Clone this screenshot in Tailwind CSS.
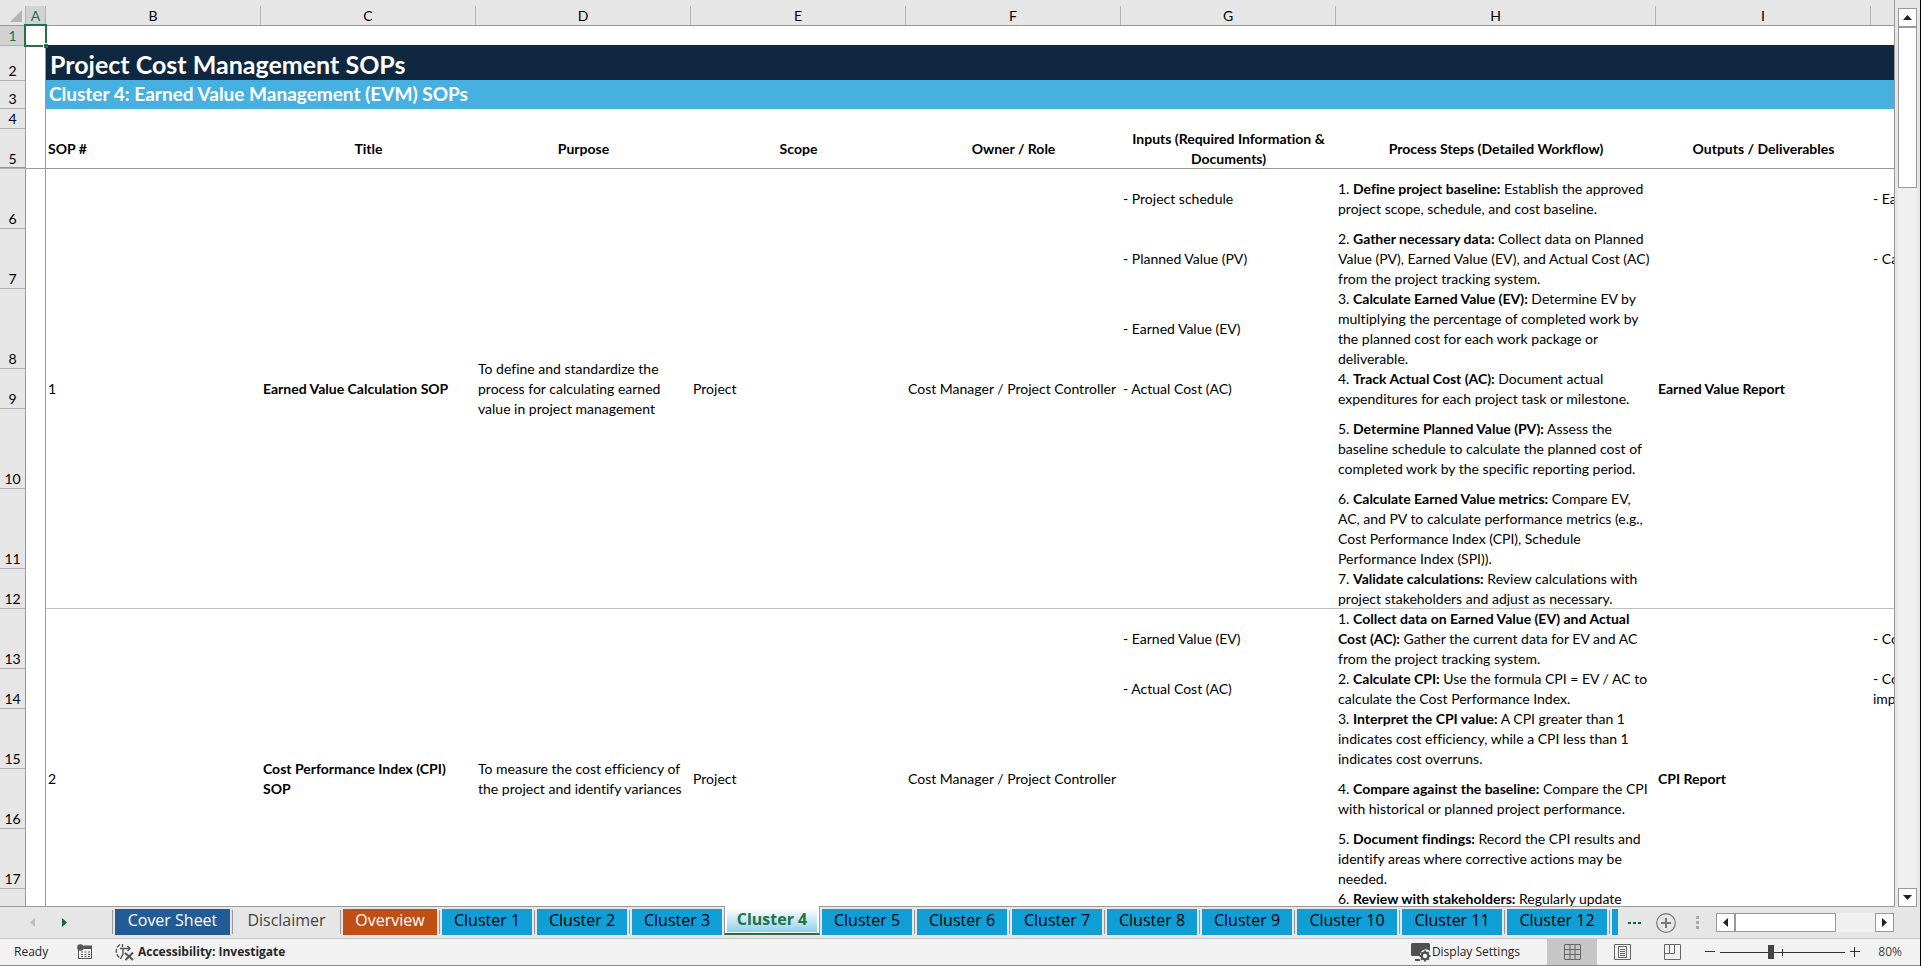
<!DOCTYPE html>
<html lang="en">
  <head>
    <meta charset="UTF-8" />
    <meta name="viewport" content="width=device-width, initial-scale=1.0" />
    <title>Project Cost Management SOPs</title>
    <script src="https://cdn.jsdelivr.net/npm/@tailwindcss/browser@4"></script>
  </head>
  <body class="h-screen overflow-hidden flex flex-col bg-[#e6e6e6] border-r border-black font-['Open_Sans','Noto_Sans',sans-serif] text-[#262626]">
    <!-- Sheet and vertical scrollbar -->
    <main class="flex-1 min-h-0 flex">
      <div class="flex-1 min-w-0 overflow-hidden pt-[6px] border-r border-b border-[#999]">
        <table class="w-full table-fixed border-separate border-spacing-0 font-['Lato',sans-serif] [font-variant-ligatures:none] text-[14px] leading-5 text-black whitespace-nowrap [&_td]:p-0 [&_td]:px-[2px] [&_td]:bg-white [&_tbody_th]:px-[2px]">
          <colgroup>
            <col class="w-[26px]" />
            <col class="w-[20px]" />
            <col class="w-[215px]" />
            <col class="w-[215px]" />
            <col class="w-[215px]" />
            <col class="w-[215px]" />
            <col class="w-[215px]" />
            <col class="w-[215px]" />
            <col class="w-[320px]" />
            <col class="w-[215px]" />
            <col />
          </colgroup>
          <thead class="text-[14px] leading-[19px] [&_th]:p-0 [&_th]:font-normal [&_th]:border-b [&_th]:border-r [&_th]:border-b-[#999] [&_th]:border-r-[#b4b4b4]">
            <tr class="h-[20px]">
              <th aria-label="Select all">
                <svg class="ml-auto mr-[3px]" width="12" height="12" viewBox="0 0 12 12"><path d="M12 0v12H0z" fill="#b4b4b4" /></svg>
              </th>
              <th class="bg-[#d2d2d2] text-[#217346]">A</th>
              <th>B</th>
              <th>C</th>
              <th>D</th>
              <th>E</th>
              <th>F</th>
              <th>G</th>
              <th>H</th>
              <th>I</th>
              <th class="!border-r-0"></th>
            </tr>
          </thead>
          <tbody class="[&_th.n]:p-0 [&_th.n]:font-normal [&_th.n]:text-[14px] [&_th.n]:leading-[19px] [&_th.n]:align-bottom [&_th.n]:border-b [&_th.n]:border-r [&_th.n]:border-b-[#b0b0b0] [&_th.n]:border-r-[#999] [&_td.a]:border-r [&_td.a]:border-[#999]">
            <tr class="h-[20px]">
              <th class="n bg-[#d2d2d2] text-[#217346]">1</th>
              <td class="a relative">
                <div class="absolute -top-[2px] -left-[2px] -right-[2px] -bottom-[1px] border-2 border-[#217346]"></div>
                <div class="absolute -right-[3px] -bottom-[2px] size-[5px] bg-[#217346] border-l border-t border-white"></div>
              </td>
              <td colspan="9"></td>
            </tr>
            <tr class="h-[35px]">
              <th class="n">2</th>
              <td class="a"></td>
              <td colspan="9" class="!bg-[#0f2840] !px-1 shadow-[0_-1px_0_#0f2840] text-white text-[25px] leading-[34px] font-bold">Project Cost Management SOPs</td>
            </tr>
            <tr class="h-[28px]">
              <th class="n">3</th>
              <td class="a"></td>
              <td colspan="9" class="!bg-[#46b1e1] !px-[3px] shadow-[0_-1px_0_#46b1e1] text-white text-[19px] leading-[26px] align-top font-bold">Cluster 4: Earned Value Management (EVM) SOPs</td>
            </tr>
            <tr class="h-[20px]">
              <th class="n">4</th>
              <td class="a"></td>
              <td colspan="9"></td>
            </tr>
            <tr class="h-[40px] [&>*]:shadow-[inset_0_-1px_0_#999] [&>*]:bg-white">
              <th class="n !bg-[#e6e6e6]">5</th>
              <td class="a"></td>
              <th class="text-left">SOP #</th>
              <th>Title</th>
              <th>Purpose</th>
              <th>Scope</th>
              <th>Owner / Role</th>
              <th>Inputs (Required Information &amp;<br />Documents)</th>
              <th>Process Steps (Detailed Workflow)</th>
              <th>Outputs / Deliverables</th>
              <th></th>
            </tr>

            <!-- SOP 1 -->
            <tr class="h-[60px]">
              <th class="n">6</th>
              <td class="a"></td>
              <td rowspan="7" class="shadow-[inset_0_-1px_0_#c0c0c0]">1</td>
              <td rowspan="7" class="shadow-[inset_0_-1px_0_#c0c0c0] font-bold">Earned Value Calculation SOP</td>
              <td rowspan="7" class="shadow-[inset_0_-1px_0_#c0c0c0]">To define and standardize the<br />process for calculating earned<br />value in project management</td>
              <td rowspan="7" class="shadow-[inset_0_-1px_0_#c0c0c0]">Project</td>
              <td rowspan="7" class="shadow-[inset_0_-1px_0_#c0c0c0]">Cost Manager / Project Controller</td>
              <td>- Project schedule</td>
              <td>1. <b>Define project baseline:</b> Establish the approved<br />project scope, schedule, and cost baseline.</td>
              <td rowspan="7" class="shadow-[inset_0_-1px_0_#c0c0c0] font-bold">Earned Value Report</td>
              <td>- Ea</td>
            </tr>
            <tr class="h-[60px]">
              <th class="n">7</th>
              <td class="a"></td>
              <td>- Planned Value (PV)</td>
              <td>2. <b>Gather necessary data:</b> Collect data on Planned<br />Value (PV), Earned Value (EV), and Actual Cost (AC)<br />from the project tracking system.</td>
              <td>- Ca</td>
            </tr>
            <tr class="h-[80px]">
              <th class="n">8</th>
              <td class="a"></td>
              <td>- Earned Value (EV)</td>
              <td>3. <b>Calculate Earned Value (EV):</b> Determine EV by<br />multiplying the percentage of completed work by<br />the planned cost for each work package or<br />deliverable.</td>
              <td></td>
            </tr>
            <tr class="h-[40px]">
              <th class="n">9</th>
              <td class="a"></td>
              <td>- Actual Cost (AC)</td>
              <td>4. <b>Track Actual Cost (AC):</b> Document actual<br />expenditures for each project task or milestone.</td>
              <td></td>
            </tr>
            <tr class="h-[80px]">
              <th class="n">10</th>
              <td class="a"></td>
              <td></td>
              <td>5. <b>Determine Planned Value (PV):</b> Assess the<br />baseline schedule to calculate the planned cost of<br />completed work by the specific reporting period.</td>
              <td></td>
            </tr>
            <tr class="h-[80px]">
              <th class="n">11</th>
              <td class="a"></td>
              <td></td>
              <td>6. <b>Calculate Earned Value metrics:</b> Compare EV,<br />AC, and PV to calculate performance metrics (e.g.,<br />Cost Performance Index (CPI), Schedule<br />Performance Index (SPI)).</td>
              <td></td>
            </tr>
            <tr class="h-[40px]">
              <th class="n">12</th>
              <td class="a"></td>
              <td class="shadow-[inset_0_-1px_0_#c0c0c0]"></td>
              <td class="shadow-[inset_0_-1px_0_#c0c0c0]">7. <b>Validate calculations:</b> Review calculations with<br />project stakeholders and adjust as necessary.</td>
              <td class="shadow-[inset_0_-1px_0_#c0c0c0]"></td>
            </tr>

            <!-- SOP 2 -->
            <tr class="h-[60px]">
              <th class="n">13</th>
              <td class="a"></td>
              <td rowspan="6">2</td>
              <td rowspan="6" class="font-bold">Cost Performance Index (CPI)<br />SOP</td>
              <td rowspan="6">To measure the cost efficiency of<br />the project and identify variances</td>
              <td rowspan="6">Project</td>
              <td rowspan="6">Cost Manager / Project Controller</td>
              <td>- Earned Value (EV)</td>
              <td>1. <b>Collect data on Earned Value (EV) and Actual<br />Cost (AC):</b> Gather the current data for EV and AC<br />from the project tracking system.</td>
              <td rowspan="6" class="font-bold">CPI Report</td>
              <td>- Co</td>
            </tr>
            <tr class="h-[40px]">
              <th class="n">14</th>
              <td class="a"></td>
              <td>- Actual Cost (AC)</td>
              <td>2. <b>Calculate CPI:</b> Use the formula CPI = EV / AC to<br />calculate the Cost Performance Index.</td>
              <td>- Co<br />imp</td>
            </tr>
            <tr class="h-[60px]">
              <th class="n">15</th>
              <td class="a"></td>
              <td></td>
              <td>3. <b>Interpret the CPI value:</b> A CPI greater than 1<br />indicates cost efficiency, while a CPI less than 1<br />indicates cost overruns.</td>
              <td></td>
            </tr>
            <tr class="h-[60px]">
              <th class="n">16</th>
              <td class="a"></td>
              <td></td>
              <td>4. <b>Compare against the baseline:</b> Compare the CPI<br />with historical or planned project performance.</td>
              <td></td>
            </tr>
            <tr class="h-[60px]">
              <th class="n">17</th>
              <td class="a"></td>
              <td></td>
              <td>5. <b>Document findings:</b> Record the CPI results and<br />identify areas where corrective actions may be<br />needed.</td>
              <td></td>
            </tr>
            <tr class="h-[60px]">
              <th class="n"></th>
              <td class="a"></td>
              <td></td>
              <td class="align-top">6. <b>Review with stakeholders:</b> Regularly update</td>
              <td></td>
            </tr>
          </tbody>
        </table>
      </div>

      <div class="w-[19px] ml-[3px] mr-[3px] pt-[8px] flex flex-col bg-[#f0f0f0] shadow-[inset_0_8px_0_#e6e6e6]">
        <button aria-label="Scroll up" class="h-[19px] bg-white border border-[#999] flex items-center justify-center">
          <svg width="9" height="5" viewBox="0 0 9 5"><path d="M4.500 0L9 5H0z" fill="#222" /></svg>
        </button>
        <div class="h-[161px] bg-white border border-[#999]"></div>
        <button aria-label="Scroll down" class="mt-auto h-[19px] bg-white border border-[#999] flex items-center justify-center">
          <svg width="9" height="5" viewBox="0 0 9 5"><path d="M0 0h9L4.500 5z" fill="#222" /></svg>
        </button>
      </div>
    </main>

    <!-- Sheet tabs -->
    <nav class="h-[32px] shrink-0 flex border-b border-[#c6c6c6] text-[16px] leading-[22px] text-black whitespace-nowrap">
      <div class="w-[112px] shrink-0 flex items-center pl-[30px] gap-[27px]">
        <button aria-label="Previous sheet"><svg width="5" height="9" viewBox="0 0 5 9"><path d="M5 0v9L0 4.500z" fill="#bdbdbd" /></svg></button>
        <button aria-label="Next sheet"><svg width="5" height="9" viewBox="0 0 5 9"><path d="M0 0v9l5-4.500z" fill="#0c6b37" /></svg></button>
      </div>
      <ul class="flex min-w-0 [&>li]:flex [&>li]:shrink-0 [&>li]:pr-[2px] [&_i]:w-px [&_i]:h-[24px] [&_i]:mt-[3px] [&_i]:mr-[2px] [&_i]:bg-[#999] [&_button]:h-[26px] [&_button]:pb-[6px]">
        <li><i></i><button class="mt-[2px] w-[115px] bg-[#215c98] text-white">Cover Sheet</button></li>
        <li><i></i><button class="mt-[2px] w-[103px] text-[#444]">Disclaimer</button></li>
        <li><i></i><button class="mt-[2px] w-[94px] bg-[#c04f15] text-white">Overview</button></li>
        <li><i></i><button class="mt-[2px] w-[90px] bg-[#0f9ed5]">Cluster 1</button></li>
        <li><i></i><button class="mt-[2px] w-[90px] bg-[#0f9ed5]">Cluster 2</button></li>
        <li><i></i><button class="mt-[2px] w-[90px] bg-[#0f9ed5]">Cluster 3</button></li>
        <li class="-mt-px w-[96px] h-[29px] !pr-0 bg-white border-x border-[#999] border-b-2 border-b-[#217346]">
          <button aria-current="page" class="mx-[2px] mt-[2px] !h-[24px] !pb-[2px] flex-1 bg-linear-to-b from-white to-[#8dd0ec] text-[#217346] font-bold">Cluster 4</button>
        </li>
        <li class="pl-[2px]"><button class="mt-[2px] w-[90px] bg-[#0f9ed5]">Cluster 5</button></li>
        <li><i></i><button class="mt-[2px] w-[90px] bg-[#0f9ed5]">Cluster 6</button></li>
        <li><i></i><button class="mt-[2px] w-[90px] bg-[#0f9ed5]">Cluster 7</button></li>
        <li><i></i><button class="mt-[2px] w-[90px] bg-[#0f9ed5]">Cluster 8</button></li>
        <li><i></i><button class="mt-[2px] w-[90px] bg-[#0f9ed5]">Cluster 9</button></li>
        <li><i></i><button class="mt-[2px] w-[100px] bg-[#0f9ed5]">Cluster 10</button></li>
        <li><i></i><button class="mt-[2px] w-[100px] bg-[#0f9ed5]">Cluster 11</button></li>
        <li><i></i><button class="mt-[2px] w-[100px] bg-[#0f9ed5]">Cluster 12</button></li>
        <li class="!pr-0"><i></i><button aria-label="Next tab" class="mt-[2px] w-[6px] bg-[#0f9ed5]"></button></li>
      </ul>
      <div class="ml-auto mr-[26px] shrink-0 flex items-center">
        <button aria-label="More sheets"><svg width="13" height="4" viewBox="0 0 13 4"><path d="M0 1h3v2H0zM5 1h3v2H5zM10 1h3v2h-3z" fill="#0c6b37" /></svg></button>
        <button aria-label="New sheet" class="ml-[15px]">
          <svg width="20" height="20" viewBox="0 0 20 20" fill="none" stroke="#777"><circle cx="10" cy="10" r="9.300" stroke-width="1.200" /><path d="M10 5v10M5 10h10" stroke-width="2" /></svg>
        </button>
        <svg class="ml-[20px]" width="3" height="13" viewBox="0 0 3 13" fill="#aaa"><path d="M0 0h3v3H0zM0 5h3v3H0zM0 10h3v3H0z" /></svg>
        <div class="ml-[17px] w-[178px] h-[19px] flex bg-[#f0f0f0]">
          <button aria-label="Scroll left" class="w-[19px] bg-white border border-[#999] flex items-center justify-center">
            <svg width="5" height="9" viewBox="0 0 5 9"><path d="M5 0v9L0 4.500z" fill="#222" /></svg>
          </button>
          <div class="w-[101px] bg-white border border-[#999]"></div>
          <button aria-label="Scroll right" class="ml-auto w-[19px] bg-white border border-[#999] flex items-center justify-center">
            <svg width="5" height="9" viewBox="0 0 5 9"><path d="M0 0v9l5-4.500z" fill="#222" /></svg>
          </button>
        </div>
      </div>
    </nav>

    <!-- Status bar -->
    <footer class="h-[27px] shrink-0 flex items-center bg-[#f2f2f2] border-b border-[#888] text-[12px] whitespace-nowrap">
      <span class="ml-[14px] w-[63px]">Ready</span>
      <button aria-label="Record macro">
        <svg width="16" height="16" viewBox="0 0 16 16" fill="none" stroke="#555"><path d="M1.500 5v9.500h13v-12H6M6 4h8.500" /><path d="M7 1.500h8V5H7z" fill="#555" stroke="none" /><circle cx="3.500" cy="3.500" r="3.300" fill="#555" stroke="none" /><path d="M4 8h2M7.500 8h2M11 8h2M4 10.500h2M7.500 10.500h2M11 10.500h2M4 12.500h2M7.500 12.500h2M11 12.500h2" /></svg>
      </button>
      <button class="ml-[22px] flex items-center gap-[3px] font-bold">
        <svg width="20" height="18" viewBox="0 0 20 18" fill="none" stroke="#555" stroke-width="1.400"><path d="M5 1.500A8 8 0 0 0 5 15" stroke-dasharray="4 1.500" /><path d="M7.500 1v3M5 5.500h10M12.500 3l2.500 2.500L12.500 8M8 6v5l-2.500 5" /><path d="M10 10l8 7M18 9.500L10.500 17" stroke-width="2" /></svg>
        Accessibility: Investigate
      </button>
      <button class="ml-auto flex items-center gap-px">
        <svg width="20" height="19" viewBox="0 0 20 19"><path d="M1.500 0h16Q19 0 19 1.500V8a6 6 0 0 0-10 5H1.500Q0 13 0 11.500v-10Q0 0 1.500 0zM4 16h5v2H4z" fill="#505050" /><circle cx="14" cy="13" r="3.300" fill="none" stroke="#505050" stroke-width="2.200" /><path d="M14 7.500v2M14 16.500v2M8.500 13h2M17.500 13h2M10.200 9.200l1.400 1.400M16.400 15.400l1.400 1.400M17.800 9.200l-1.400 1.400M11.600 15.400l-1.400 1.400" stroke="#505050" stroke-width="2" /></svg>
        Display Settings
      </button>
      <button aria-label="Normal view" class="ml-[27px] w-[50px] h-full bg-[#c6c6c6] flex items-center justify-center">
        <svg width="17" height="16" viewBox="0 0 17 16" fill="none" stroke="#666"><path d="M.5.5h16v15H.5zM6 0v16M11 0v16M0 5.500h17M0 10.500h17" /></svg>
      </button>
      <button aria-label="Page layout view" class="w-[50px] h-full flex items-center justify-center">
        <svg width="17" height="16" viewBox="0 0 17 16" fill="none" stroke="#666"><path d="M.5.5h16v15H.5zM4.500 2.500h8v11h-8zM6 5.500h5M6 7.500h5M6 9.500h5M6 11.500h5" /></svg>
      </button>
      <button aria-label="Page break preview" class="w-[50px] h-full flex items-center justify-center">
        <svg width="17" height="16" viewBox="0 0 17 16" fill="none" stroke="#666"><path d="M.5.5h16v15H.5zM.5 9.500h10v-9M5.500 .5v9" /></svg>
      </button>
      <button aria-label="Zoom out" class="ml-[8px]"><svg width="10" height="10" viewBox="0 0 10 10"><path d="M0 4.500h10" stroke="#333" /></svg></button>
      <div class="relative ml-[5px] w-[125px] h-[14px] flex">
        <div class="absolute left-[62px] top-[4px] w-px h-[7px] bg-[#333]"></div>
        <input type="range" aria-label="Zoom" min="0" max="100" value="40" class="w-full appearance-none bg-transparent [&::-webkit-slider-runnable-track]:h-px [&::-webkit-slider-runnable-track]:bg-[#333] [&::-webkit-slider-thumb]:appearance-none [&::-webkit-slider-thumb]:w-[6px] [&::-webkit-slider-thumb]:h-[14px] [&::-webkit-slider-thumb]:-mt-[7px] [&::-webkit-slider-thumb]:bg-[#444]" />
      </div>
      <button aria-label="Zoom in" class="ml-[5px]"><svg width="10" height="10" viewBox="0 0 10 10"><path d="M0 4.500h10M4.500 0v10" stroke="#333" /></svg></button>
      <button class="w-[42px] mr-[18px] text-right text-[#444]">80%</button>
    </footer>
  </body>
</html>
